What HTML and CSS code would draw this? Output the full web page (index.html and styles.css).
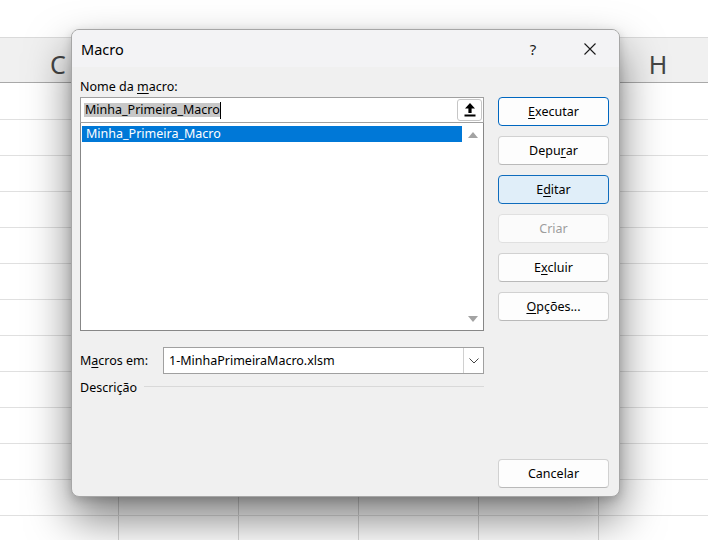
FILE: index.html
```html
<!DOCTYPE html>
<html lang="pt">
<head>
<meta charset="utf-8">
<title>Macro</title>
<link rel="stylesheet" href="styles.css">
</head>
<body>
<div class="sheet">
  <div class="ribbon"></div>
  <div class="colheads">
    <div class="colhead">C</div>
    <div class="colhead"></div>
    <div class="colhead"></div>
    <div class="colhead"></div>
    <div class="colhead"></div>
    <div class="colhead">H</div>
  </div>
  <div class="cells"></div>
</div>

<div class="dialog">
  <div class="titlebar">
    <span class="title">Macro</span>
    <span class="cap help">?</span>
    <span class="cap close">
      <svg width="12" height="12" viewBox="0 0 12 12"><path d="M0.5 0.5 L11.5 11.5 M11.5 0.5 L0.5 11.5" stroke="#1a1a1a" stroke-width="1.1" fill="none"/></svg>
    </span>
  </div>
  <div class="dbody">
    <div class="left">
      <div class="lbl top-lbl">Nome da <u>m</u>acro:</div>
      <div class="namebox">
        <span class="sel">Minha_Primeira_Macro</span><span class="caret"></span>
        <span class="upbtn">
          <svg width="12" height="14" viewBox="0 0 12 14"><polygon points="6,0 11,5.5 7.6,5.5 7.6,10 4.4,10 4.4,5.5 1,5.5" fill="#000"/><rect x="0.5" y="11.5" width="11" height="2" fill="#000"/></svg>
        </span>
      </div>
      <div class="list">
        <div class="items">
          <div class="item selected">Minha_Primeira_Macro</div>
        </div>
        <div class="scroll">
          <svg width="10" height="6" viewBox="0 0 10 6"><polygon points="5,0 10,6 0,6" fill="#a3a3a3"/></svg>
          <svg width="10" height="6" viewBox="0 0 10 6"><polygon points="0,0 10,0 5,6" fill="#a3a3a3"/></svg>
        </div>
      </div>
      <div class="inrow">
        <span class="lbl inlbl">M<u>a</u>cros em:</span>
        <div class="combo">
          <span class="ctext">1-MinhaPrimeiraMacro.xlsm</span>
          <span class="dd">
            <svg width="10" height="6" viewBox="0 0 10 6"><path d="M0.5 0.5 L5 5 L9.5 0.5" stroke="#444" stroke-width="1" fill="none"/></svg>
          </span>
        </div>
      </div>
      <div class="desc"><span class="lbl">Descrição</span><span class="rule"></span></div>
    </div>
    <div class="right">
      <div class="btn primary"><u>E</u>xecutar</div>
      <div class="btn">Depu<u>r</u>ar</div>
      <div class="btn hover">E<u>d</u>itar</div>
      <div class="btn disabled">Criar</div>
      <div class="btn">E<u>x</u>cluir</div>
      <div class="btn"><u>O</u>pções...</div>
      <div class="btn cancel">Cancelar</div>
    </div>
  </div>
</div>
</body>
</html>
```
FILE: styles.css
```css
html, body {
  margin: 0;
  width: 708px;
  height: 540px;
  overflow: hidden;
  background: #ffffff;
  font-family: "Noto Sans", "Open Sans", sans-serif;
}

.sheet {
  height: 540px;
}

.ribbon {
  height: 37px;
  background: #ffffff;
}

.colheads {
  display: flex;
  margin-left: -2px;
  height: 44px;
  border-top: 1px solid #dadada;
  border-bottom: 1px solid #a9a9a9;
  background: #f0f0f0;
}

.colhead {
  flex: none;
  width: 120px;
  box-sizing: border-box;
  padding-top: 14px;
  line-height: 25px;
  font-size: 25px;
  text-align: center;
  color: #454545;
}

.cells {
  height: 457px;
  background:
    repeating-linear-gradient(to bottom, transparent 0 35px, #e0e0e0 35px 36px),
    repeating-linear-gradient(to right, transparent 0 119px, #d6d6d6 119px 120px);
  background-position: 0 1px, -1px 0;
}

/* dialog window */
.dialog {
  position: absolute;
  left: 71px;
  top: 29px;
  width: 549px;
  height: 468px;
  box-sizing: border-box;
  border: 1px solid #a6a6a6;
  border-radius: 8px;
  background: #f0f0f0;
  overflow: hidden;
  display: flex;
  flex-direction: column;
  box-shadow: 0 22px 44px rgba(0, 0, 0, 0.5), 0 3px 10px rgba(0, 0, 0, 0.16);
  color: #000;
}

.titlebar {
  height: 37px;
  flex: none;
  display: flex;
  align-items: center;
  padding-left: 9px;
  padding-right: 6px;
  background: #f3f3f5;
}

.title {
  flex: 1;
  font-size: 14.5px;
}

.cap {
  width: 46px;
  height: 37px;
  display: flex;
  align-items: center;
  justify-content: center;
}

.help {
  margin-right: 11px;
  font-size: 15px;
  color: #1a1a1a;
}

.dbody {
  flex: 1;
  display: flex;
  gap: 14px;
  padding: 0 10px 8px 8px;
  font-size: 12.5px;
}

.left {
  width: 404px;
  display: flex;
  flex-direction: column;
  padding-top: 11px;
}

.lbl u, .btn u {
  text-underline-offset: 2px;
  text-decoration-thickness: 1px;
}

.top-lbl {
  height: 19px;
  line-height: 18px;
}

.namebox {
  position: relative;
  z-index: 1;
  height: 26px;
  box-sizing: border-box;
  border: 1px solid #a0a0a0;
  background: #ffffff;
  display: flex;
  align-items: center;
  padding-left: 3px;
}

.sel {
  background: #c8c8c8;
  line-height: 14px;
  height: 14px;
  padding-left: 1px;
}

.caret {
  width: 1px;
  height: 17px;
  background: #000;
}

.upbtn {
  margin-left: auto;
  margin-right: 1px;
  width: 25px;
  height: 22px;
  box-sizing: border-box;
  border: 1px solid #c6c6c6;
  border-radius: 3px;
  background: #ffffff;
  display: flex;
  align-items: center;
  justify-content: center;
}

.list {
  margin-top: -1px;
  height: 209px;
  box-sizing: border-box;
  border: 1px solid #878787;
  background: #ffffff;
  display: flex;
}

.items {
  flex: 1;
  padding: 3px 0 0 1px;
}

.item {
  height: 16px;
  line-height: 16px;
  padding-left: 4px;
}

.item.selected {
  background: #0078d7;
  color: #ffffff;
}

.scroll {
  width: 21px;
  display: flex;
  flex-direction: column;
  justify-content: space-between;
  align-items: center;
  padding: 9px 0 8px;
}

.inrow {
  margin-top: 16px;
  display: flex;
  align-items: center;
}

.inlbl {
  width: 83px;
  flex: none;
}

.combo {
  flex: 1;
  height: 27px;
  box-sizing: border-box;
  border: 1px solid #a0a0a0;
  background: #ffffff;
  display: flex;
  align-items: center;
}

.ctext {
  flex: 1;
  padding-left: 5px;
}

.dd {
  width: 20px;
  height: 25px;
  box-sizing: border-box;
  border-left: 1px solid #d0d0d0;
  display: flex;
  align-items: center;
  justify-content: center;
}

.desc {
  margin-top: 5px;
  height: 18px;
  line-height: 18px;
  display: flex;
  align-items: center;
}

.rule {
  flex: 1;
  height: 1px;
  margin-left: 7px;
  margin-bottom: 3px;
  background: #d9d9d9;
}

.right {
  width: 111px;
  display: flex;
  flex-direction: column;
  gap: 10px;
  padding-top: 30px;
}

.btn {
  height: 29px;
  box-sizing: border-box;
  border: 1px solid #d1d1d1;
  border-bottom-color: #b9b9b9;
  border-radius: 4px;
  background: #fdfdfd;
  display: flex;
  align-items: center;
  justify-content: center;
}

.btn.primary {
  border-color: #0067c0;
}

.btn.hover {
  background: #e0eef9;
  border-color: #0f6cbd;
}

.btn.disabled {
  color: #9d9d9d;
  border-color: #e0e0e0;
  background: #fbfbfb;
}

.btn.cancel {
  margin-top: auto;
}
```
